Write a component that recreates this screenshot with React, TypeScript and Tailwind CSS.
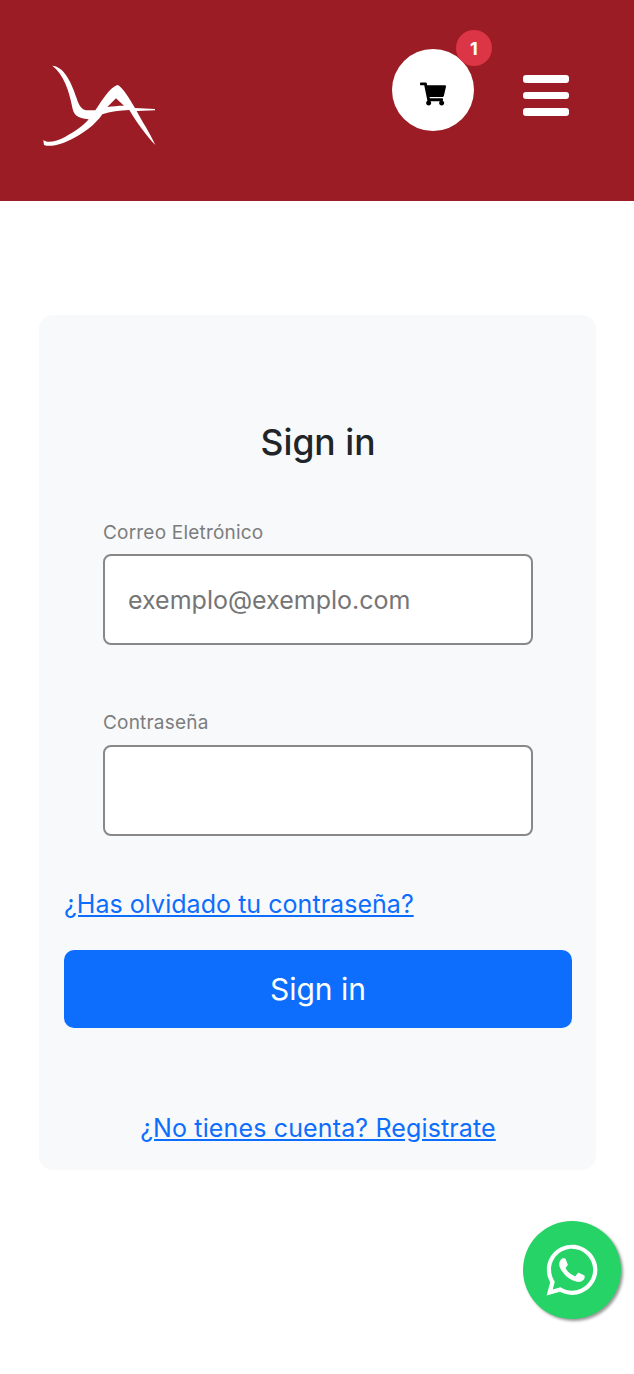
import { FaShoppingCart, FaWhatsapp } from "react-icons/fa";

function Logo() {
  return (
    <svg viewBox="0 0 160 120" className="w-[160px] h-[120px] block" aria-label="LA">
      <g transform="scale(0.3333)">
        <path
          fill="#fff"
          fillRule="evenodd"
          d="M97 74 C128 76 152 115 170 172 C176 192 184 205 198 208 L226 208 C245 180 268 140 292 132 C305 134 330 175 345 201 L405 204 L405 208 L350 210 C365 240 390 275 406 312 C380 285 350 245 328 207 C300 208 270 212 247 220 C225 252 190 278 150 297 C120 311 90 319 72 312 L70 296 C80 308 110 301 135 288 C165 272 192 252 206 235 C172 232 160 222 156 195 C148 150 130 100 97 74 Z M262 198 L288 172 L312 194 C295 194 278 196 262 198 Z"
        />
      </g>
    </svg>
  );
}

function Field({ label, placeholder, gap }: { label: string; placeholder?: string; gap?: boolean }) {
  return (
    <div className={gap ? "mt-[64px]" : "pt-[1px]"}>
      <div className={gap ? "text-[19px] leading-[28px] tracking-[0.2px] text-[#7c7d7e] mb-[8px]" : "text-[19px] leading-[28px] tracking-[0.2px] text-[#7c7d7e] mb-[7px]"}>{label}</div>
      <div className="h-[91px] border-2 border-[#888888] rounded-[8px] bg-white flex items-center pl-[23px] pt-[3px] text-[25px] text-[#757575]">
        {placeholder}
      </div>
    </div>
  );
}

export default function App() {
  return (
    <div className="relative min-h-[1374px] bg-white font-['Inter',sans-serif] text-[#212529]">
      <header className="h-[201px] bg-[#9b1c24] flex items-center pl-[20px] pr-[65px]">
        <Logo />
        <div className="relative ml-auto w-[82px] h-[82px] rounded-full bg-white flex items-center justify-center mb-[21px]">
          <FaShoppingCart className="text-black w-[26px] h-[24px] mt-[7px]" />
          <span className="absolute left-[64px] top-[-19px] w-[36px] h-[36px] rounded-full bg-[#dc3545] text-white font-bold text-[18px] flex items-center justify-center">
            1
          </span>
        </div>
        <div className="ml-[49px] w-[46px] flex flex-col gap-[9px] mb-[10px]">
          <span className="h-[7.5px] rounded-[3px] bg-white" />
          <span className="h-[7.5px] rounded-[3px] bg-white" />
          <span className="h-[7.5px] rounded-[3px] bg-white" />
        </div>
      </header>

      <main className="mt-[114px] mx-[39px] w-[557px] h-[855px] bg-[#f8f9fa] rounded-[14px] pl-[25px] pr-[24px] pt-[101px]">
        <h1 className="text-center text-[35.5px] leading-[54px] font-medium">Sign in</h1>
        <div className="mt-[48px] mx-[39px]">
          <Field label="Correo Eletrónico" placeholder="exemplo@exemplo.com" />
          <Field label="Contraseña" gap />
        </div>
        <a href="#" className="block mt-[50px] text-[25px] leading-[36px] tracking-[0.04px] text-[#0d6efd] underline">
          ¿Has olvidado tu contraseña?
        </a>
        <button className="block mt-[28px] w-full h-[78px] rounded-[10px] bg-[#0d6efd] text-white text-[30px]">
          Sign in
        </button>
        <a href="#" className="block mt-[82px] text-center text-[25px] leading-[36px] tracking-[0.14px] text-[#0d6efd] underline">
          ¿No tienes cuenta? Registrate
        </a>
      </main>

      <div className="fixed left-[523px] top-[1221px] w-[98px] h-[98px] rounded-full bg-[#25d366] text-white flex items-center justify-center shadow-[2px_2px_3px_#999]">
        <FaWhatsapp className="w-[58px] h-[58px]" />
      </div>
    </div>
  );
}
